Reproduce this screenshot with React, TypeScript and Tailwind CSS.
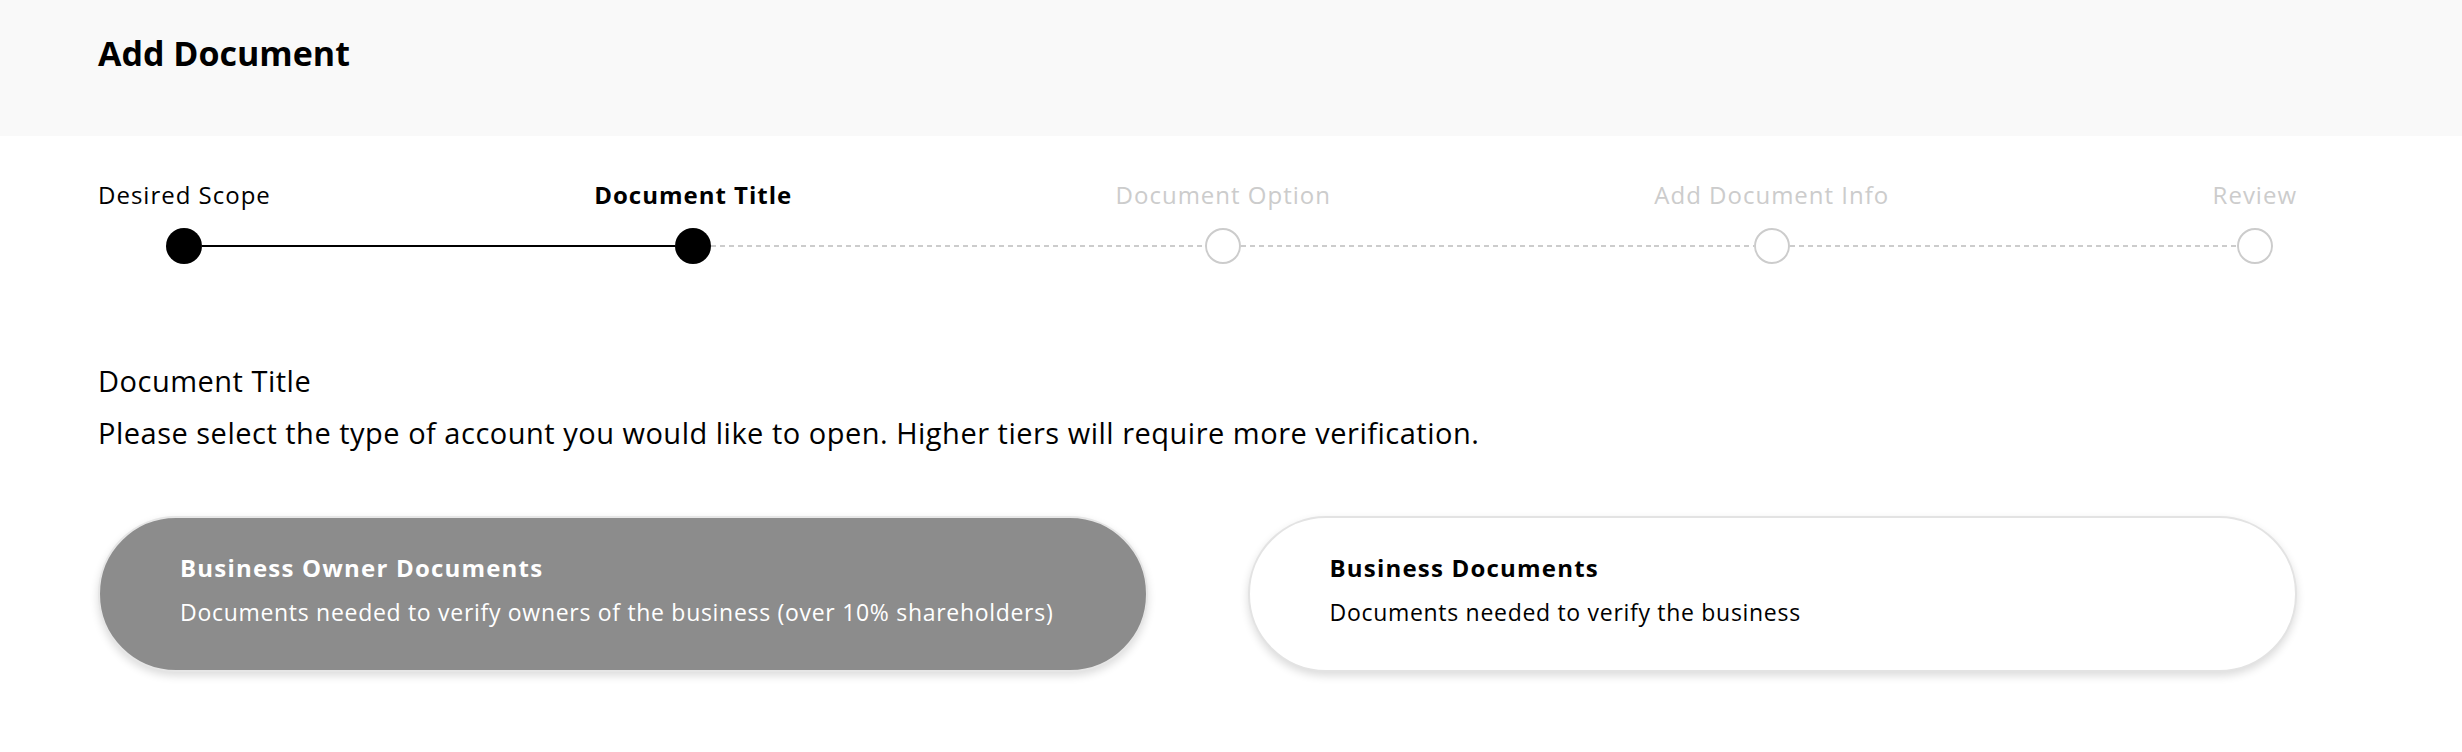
import { Fragment } from "react";

type StepState = "done" | "current" | "todo";

const steps: { label: string; state: StepState }[] = [
  { label: "Desired Scope", state: "done" },
  { label: "Document Title", state: "current" },
  { label: "Document Option", state: "todo" },
  { label: "Add Document Info", state: "todo" },
  { label: "Review", state: "todo" },
];

const options = [
  {
    title: "Business Owner Documents",
    text: "Documents needed to verify owners of the business (over 10% shareholders)",
    selected: true,
  },
  {
    title: "Business Documents",
    text: "Documents needed to verify the business",
    selected: false,
  },
];

// the link leaving step i is solid once step i+1 has been reached
function Segment({ solid, hidden }: { solid: boolean; hidden?: boolean }) {
  if (hidden) return <div className="flex-1" />;
  return solid ? (
    <div className="h-[2px] flex-1 bg-black" />
  ) : (
    <div className="h-[2px] flex-1 bg-[repeating-linear-gradient(to_right,#cccccc_0_5px,transparent_5px_9px)]" />
  );
}

function Stepper() {
  const reached = (i: number) => i < steps.length && steps[i].state !== "todo";
  return (
    <div className="flex">
      {steps.map((s, i) => (
        <Fragment key={s.label}>
          {i > 0 && (
            <div className="flex h-9 flex-1 items-center self-end">
              <Segment solid={reached(i)} />
            </div>
          )}
          <div className="flex shrink-0 flex-col">
            <span
              className={
                "whitespace-nowrap text-[24px] leading-[32px] tracking-[1px] " +
                (s.state === "current"
                  ? "font-bold text-black"
                  : s.state === "done"
                    ? "text-black"
                    : "text-[#cccccc]")
              }
            >
              {s.label}
            </span>
            <div className="mt-[17px] flex h-9 items-center">
              <Segment solid={reached(i)} hidden={i === 0} />
              {s.state === "todo" ? (
                <div className="size-9 shrink-0 rounded-full border-2 border-[#cccccc] bg-white" />
              ) : (
                <div className="size-9 shrink-0 rounded-full bg-black" />
              )}
              <Segment solid={reached(i + 1)} hidden={i === steps.length - 1} />
            </div>
          </div>
        </Fragment>
      ))}
    </div>
  );
}

export default function App() {
  return (
    <div className="min-h-screen bg-white font-['Open_Sans','Noto_Sans',sans-serif] text-black">
      <header className="h-[136px] bg-[#f9f9f9] pl-[98px] pt-[30px]">
        <h1 className="text-[34px] font-bold leading-[46px]">Add Document</h1>
      </header>

      <main className="pl-[98px] pr-[165px] pt-[43px]">
        <Stepper />

        <h2 className="mt-[91px] text-[29px] leading-[52px] tracking-[0.5px]">Document Title</h2>
        <p className="text-[29px] leading-[52px] tracking-[0.5px]">
          Please select the type of account you would like to open. Higher tiers will require more
          verification.
        </p>

        <div className="mt-[57px] grid grid-cols-2 gap-[100px]">
          {options.map((o) => (
            <button
              key={o.title}
              type="button"
              className={
                "flex h-[156px] flex-col justify-start rounded-full border-2 pl-20 pt-8 text-left shadow-[0_4px_8px_rgba(0,0,0,0.14)] " +
                (o.selected
                  ? "border-[#e6e6e6] bg-[#8c8c8c] text-white"
                  : "border-[#e3e3e3] bg-white text-black")
              }
            >
              <span className="text-[24px] font-bold leading-[36px] tracking-[1.2px]">{o.title}</span>
              <span className="mt-2 text-[23px] leading-[36px] tracking-[0.7px]">{o.text}</span>
            </button>
          ))}
        </div>
      </main>
    </div>
  );
}
